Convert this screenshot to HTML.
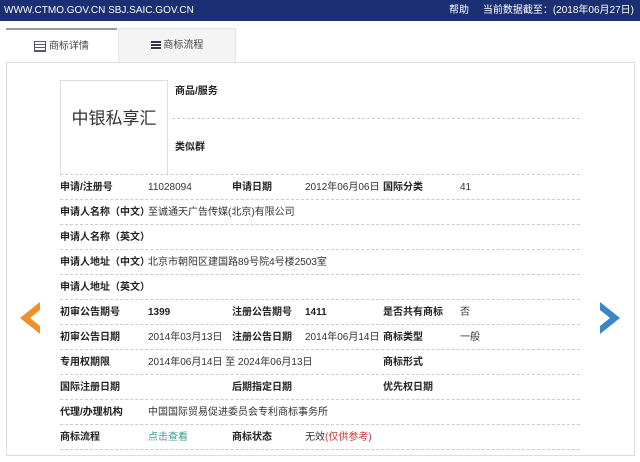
<!DOCTYPE html>
<html><head><meta charset="utf-8"><style>
body{margin:0;width:640px;height:462px;background:#fff;font-family:"Liberation Sans","Noto Sans CJK SC",sans-serif;font-size:10px;color:#333;position:relative;overflow:hidden}
.top{position:absolute;left:0;top:0;width:640px;height:21px;background:#1b2f72;color:#fff;font-size:10px;line-height:21px}
.top .l{position:absolute;left:4px}.top .r{position:absolute;right:6px}
.tab{position:absolute;top:28px;height:34px;line-height:34px;font-size:10px;color:#444}
.box{position:absolute;left:6px;top:62px;width:627px;height:392px;border:1px solid #ddd}
.logo{position:absolute;left:60px;top:80px;width:106px;height:94px;border:1px solid #ddd;border-bottom:none;font-size:17px;text-align:center;line-height:76px;color:#333;background:#fff}
.t{position:absolute;white-space:nowrap;line-height:14px;height:14px}
.b{font-weight:bold;color:#222}
.line{position:absolute;left:60px;width:520px;border-top:1px dashed #ccc}
</style></head><body>
<div class="top"><span class="l">WWW.CTMO.GOV.CN SBJ.SAIC.GOV.CN</span><span class="r">帮助&nbsp;&nbsp;&nbsp;&nbsp;&nbsp;当前数据截至：(2018年06月27日)</span></div>
<div class="tab" style="left:6px;width:111px;border-top:2px solid #999;background:#fff;text-align:center">
<span style="display:inline-block;width:10px;height:9px;border:1px solid #557;vertical-align:middle;background:repeating-linear-gradient(#fff 0 2px,#557 2px 3px)"></span> 商标详情</div>
<div class="tab" style="left:118px;width:116px;background:#f4f4f4;border:1px solid #e4e4e4;border-bottom:none;text-align:center">
<span style="display:inline-block;width:10px;height:9px;vertical-align:middle;background:repeating-linear-gradient(#335 0 2px,#fff 2px 3px)"></span> 商标流程</div>
<div class="box"></div>
<div class="logo">中银私享汇</div>
<div class="line" style="left:60px;top:174px"></div>
<div class="t b" style="left:175px;top:85px">商品/服务</div>
<div class="line" style="left:172px;width:408px;top:118px"></div>
<div class="t b" style="left:175px;top:141px">类似群</div>

<div class="t b" style="left:60px;top:181px">申请/注册号</div><div class="t" style="left:148px;top:181px">11028094</div>
<div class="t b" style="left:232px;top:181px">申请日期</div><div class="t" style="left:305px;top:181px">2012年06月06日</div>
<div class="t b" style="left:383px;top:181px">国际分类</div><div class="t" style="left:460px;top:181px">41</div>
<div class="line" style="top:199px"></div>
<div class="t b" style="left:60px;top:206px">申请人名称（中文）</div><div class="t" style="left:148px;top:206px">至诚通天广告传媒(北京)有限公司</div>
<div class="line" style="top:224px"></div>
<div class="t b" style="left:60px;top:231px">申请人名称（英文）</div>
<div class="line" style="top:249px"></div>
<div class="t b" style="left:60px;top:256px">申请人地址（中文）</div><div class="t" style="left:148px;top:256px">北京市朝阳区建国路89号院4号楼2503室</div>
<div class="line" style="top:274px"></div>
<div class="t b" style="left:60px;top:281px">申请人地址（英文）</div>
<div class="line" style="top:299px"></div>
<div class="t b" style="left:60px;top:306px">初审公告期号</div><div class="t b" style="left:148px;top:306px">1399</div>
<div class="t b" style="left:232px;top:306px">注册公告期号</div><div class="t b" style="left:305px;top:306px">1411</div>
<div class="t b" style="left:383px;top:306px">是否共有商标</div><div class="t" style="left:460px;top:306px">否</div>
<div class="line" style="top:324px"></div>
<div class="t b" style="left:60px;top:331px">初审公告日期</div><div class="t" style="left:148px;top:331px">2014年03月13日</div>
<div class="t b" style="left:232px;top:331px">注册公告日期</div><div class="t" style="left:305px;top:331px">2014年06月14日</div>
<div class="t b" style="left:383px;top:331px">商标类型</div><div class="t" style="left:460px;top:331px">一般</div>
<div class="line" style="top:349px"></div>
<div class="t b" style="left:60px;top:356px">专用权期限</div><div class="t" style="left:148px;top:356px">2014年06月14日 至 2024年06月13日</div>
<div class="t b" style="left:383px;top:356px">商标形式</div>
<div class="line" style="top:374px"></div>
<div class="t b" style="left:60px;top:381px">国际注册日期</div>
<div class="t b" style="left:232px;top:381px">后期指定日期</div>
<div class="t b" style="left:383px;top:381px">优先权日期</div>
<div class="line" style="top:399px"></div>
<div class="t b" style="left:60px;top:406px">代理/办理机构</div><div class="t" style="left:148px;top:406px">中国国际贸易促进委员会专利商标事务所</div>
<div class="line" style="top:424px"></div>
<div class="t b" style="left:60px;top:431px">商标流程</div><div class="t" style="left:148px;top:431px;color:#3a9a9a">点击查看</div>
<div class="t b" style="left:232px;top:431px">商标状态</div><div class="t" style="left:305px;top:431px">无效<span style="color:#c33">(仅供参考)</span></div>
<div class="line" style="top:449px"></div>
<svg style="position:absolute;left:16px;top:300px" width="26" height="36"><polygon points="24,2 4,18 24,34 24,26 14,18 24,10" fill="#f0902a"/></svg>
<svg style="position:absolute;left:598px;top:300px" width="26" height="36"><polygon points="2,2 22,18 2,34 2,26 12,18 2,10" fill="#3b86c6"/></svg>
</body></html>
